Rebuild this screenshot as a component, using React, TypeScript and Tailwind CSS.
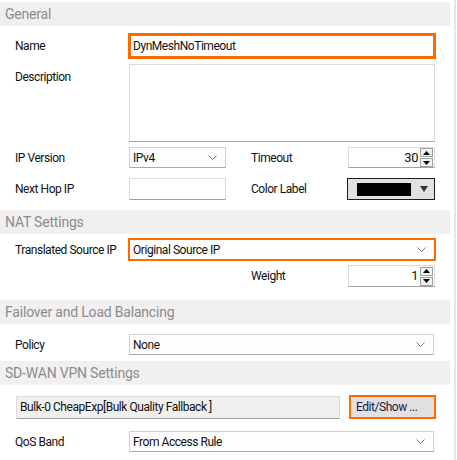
import type { ReactNode } from 'react';

const font = { fontFamily: 'Roboto, "Liberation Sans", Arial, sans-serif' };

function Header({ title }: { title: string }) {
  return (
    <div className="flex h-[24px] w-[450px] items-center bg-[#f0f0f0] pl-[5px] text-[14px] tracking-[-0.2px] text-[#8c8c8c]">
      {title}
    </div>
  );
}

function Chevron() {
  return (
    <svg width="9" height="6" viewBox="0 0 9 6" className="shrink-0">
      <path d="M0.5 0.5 L4.5 4.5 L8.5 0.5" fill="none" stroke="#7a7a7a" strokeWidth="1" />
    </svg>
  );
}

function Select({ value, width, orange }: { value: string; width: string; orange?: boolean }) {
  return (
    <div
      className={`flex h-full items-center justify-between bg-[#fdfdfd] pl-[3px] pr-[8px] ${width} ${
        orange ? 'border-2 border-[#ff6a00]' : 'border border-[#d0d0d0] border-b-[#a8a8a8]'
      }`}
    >
      <span>{value}</span>
      <Chevron />
    </div>
  );
}

function Spinner({ value }: { value: string }) {
  return (
    <div className="flex h-full w-[87px] items-center border border-[#dcdcdc] border-b-[#a0a0a0] bg-white">
      <span className="flex-1 pr-[2px] text-right text-[13px]">{value}</span>
      <div className="mr-[1px] flex flex-col gap-[1px]">
        <div className="flex h-[9px] w-[13px] items-center justify-center border border-[#a0a0a0] bg-[#f0f0f0]">
          <svg width="7" height="4" viewBox="0 0 7 4">
            <path d="M0 4 L3.5 0 L7 4 Z" fill="#000" />
          </svg>
        </div>
        <div className="flex h-[9px] w-[13px] items-center justify-center border border-[#a0a0a0] bg-[#f0f0f0]">
          <svg width="7" height="4" viewBox="0 0 7 4">
            <path d="M0 0 L3.5 4 L7 0 Z" fill="#000" />
          </svg>
        </div>
      </div>
    </div>
  );
}

function Row({ label, height, mt, children }: { label: string; height: string; mt: string; children: ReactNode }) {
  return (
    <div className={`flex items-center ${height} ${mt}`}>
      <span className="w-[128px] shrink-0 pl-[15px]">{label}</span>
      {children}
    </div>
  );
}

export default function App() {
  return (
    <div className="flex h-[460px] w-[457px] bg-white text-[12px] tracking-[-0.45px] text-[#111]" style={font}>
      <div className="w-[450px] pt-[2px]">
        <Header title="General" />

        <Row label="Name" height="h-[26px]" mt="mt-[7px]">
          <div className="flex h-full w-[308px] items-center border-[3px] border-[#ff6a00] bg-white pl-[2px]">
            DynMeshNoTimeout
          </div>
        </Row>

        <div className="mt-[5px] flex h-[78px]">
          <span className="w-[129px] shrink-0 pl-[15px] pt-[4px]">Description</span>
          <div className="h-full w-[306px] border border-[#dcdcdc] border-b-[#a0a0a0] bg-white" />
        </div>

        <div className="mt-[5px] flex h-[21px] items-center">
          <span className="w-[129px] shrink-0 pl-[15px]">IP Version</span>
          <Select value="IPv4" width="w-[97px]" />
          <span className="ml-[25px] w-[97px] shrink-0">Timeout</span>
          <Spinner value="30" />
        </div>

        <div className="mt-[10px] flex h-[22px] items-center">
          <span className="w-[129px] shrink-0 pl-[15px]">Next Hop IP</span>
          <div className="h-full w-[97px] border border-[#dcdcdc] border-b-[#a0a0a0] bg-white" />
          <span className="ml-[25px] w-[96px] shrink-0">Color Label</span>
          <div className="flex h-full w-[88px] items-center border border-[#1a1a1a] bg-[#e1e1e1] pl-[9px]">
            <div className="h-[13px] w-[54px] bg-black" />
            <svg width="8" height="6" viewBox="0 0 8 6" className="ml-[9px]">
              <path d="M0 0 L8 0 L4 6 Z" fill="#333" />
            </svg>
          </div>
        </div>

        <div className="mt-[10px]">
          <Header title="NAT Settings" />
        </div>

        <Row label="Translated Source IP" height="h-[23px]" mt="mt-[4px]">
          <Select value="Original Source IP" width="w-[308px]" orange />
        </Row>

        <div className="mt-[4px] flex h-[22px] items-center">
          <span className="ml-[251px] w-[97px] shrink-0">Weight</span>
          <Spinner value="1" />
        </div>

        <div className="mt-[13px]">
          <Header title="Failover and Load Balancing" />
        </div>

        <div className="mt-[10px] flex h-[21px] items-center">
          <span className="w-[129px] shrink-0 pl-[15px]">Policy</span>
          <Select value="None" width="w-[305px]" />
        </div>

        <div className="mt-[6px]">
          <Header title="SD-WAN VPN Settings" />
        </div>

        <div className="mt-[10px] flex h-[24px] items-center">
          <div className="ml-[16px] flex h-[23px] w-[324px] items-center border border-[#dcdcdc] border-b-[#a0a0a0] bg-[#f0f0f0] pl-[3px]">
            Bulk-0 CheapExp[Bulk Quality Fallback ]
          </div>
          <button
            type="button"
            className="ml-[9px] flex h-full w-[87px] items-center border-2 border-[#ff6a00] bg-[#e1e1e1] pl-[5px] text-[#1a1a3a]"
          >
            Edit/Show ...
          </button>
        </div>

        <div className="mt-[12px] flex h-[21px] items-center">
          <span className="w-[129px] shrink-0 pl-[15px]">QoS Band</span>
          <Select value="From Access Rule" width="w-[305px]" />
        </div>
      </div>
      <div className="ml-[4px] w-[3px] border-l-2 border-[#e6e6e6]" />
    </div>
  );
}
